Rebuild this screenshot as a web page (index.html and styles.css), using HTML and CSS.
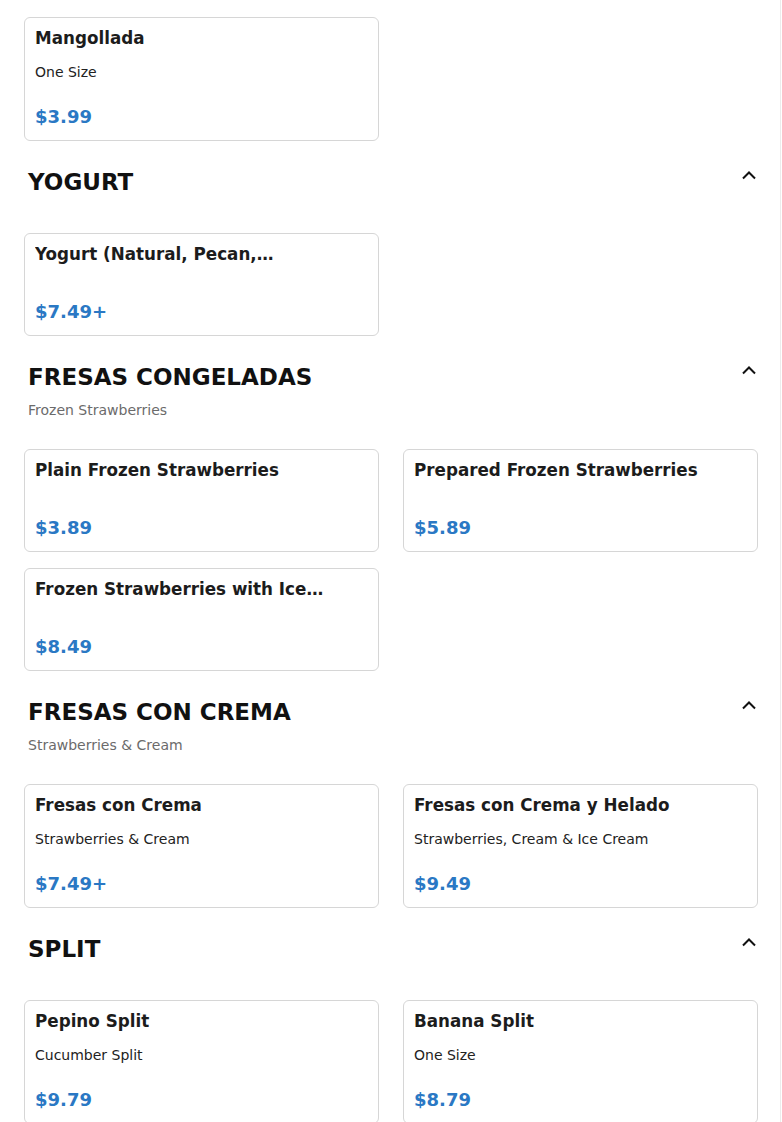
FILE: index.html
```html
<!DOCTYPE html>
<html lang="es">
<head>
<meta charset="utf-8">
<title>Menu</title>
<link rel="stylesheet" href="styles.css">
</head>
<body>
<div class="page">
  <div class="grid">
    <div class="card">
      <div class="title">Mangollada</div>
      <div class="desc">One Size</div>
      <div class="price">$3.99</div>
    </div>
  </div>

  <section class="section">
    <div class="head">
      <div class="head-text"><h2>YOGURT</h2></div>
      <svg class="chev" width="18" height="22" viewBox="0 0 18 22"><path d="M3 14.5 L9 8.5 L15 14.5" fill="none" stroke="#111" stroke-width="2"/></svg>
    </div>
    <div class="grid">
      <div class="card">
        <div class="title">Yogurt (Natural, Pecan,…</div>
        <div class="price">$7.49+</div>
      </div>
    </div>
  </section>

  <section class="section">
    <div class="head">
      <div class="head-text"><h2>FRESAS CONGELADAS</h2><p class="sub">Frozen Strawberries</p></div>
      <svg class="chev" width="18" height="22" viewBox="0 0 18 22"><path d="M3 14.5 L9 8.5 L15 14.5" fill="none" stroke="#111" stroke-width="2"/></svg>
    </div>
    <div class="grid">
      <div class="card">
        <div class="title">Plain Frozen Strawberries</div>
        <div class="price">$3.89</div>
      </div>
      <div class="card">
        <div class="title">Prepared Frozen Strawberries</div>
        <div class="price">$5.89</div>
      </div>
      <div class="card">
        <div class="title">Frozen Strawberries with Ice…</div>
        <div class="price">$8.49</div>
      </div>
    </div>
  </section>

  <section class="section">
    <div class="head">
      <div class="head-text"><h2>FRESAS CON CREMA</h2><p class="sub">Strawberries &amp; Cream</p></div>
      <svg class="chev" width="18" height="22" viewBox="0 0 18 22"><path d="M3 14.5 L9 8.5 L15 14.5" fill="none" stroke="#111" stroke-width="2"/></svg>
    </div>
    <div class="grid">
      <div class="card">
        <div class="title">Fresas con Crema</div>
        <div class="desc">Strawberries &amp; Cream</div>
        <div class="price">$7.49+</div>
      </div>
      <div class="card">
        <div class="title">Fresas con Crema y Helado</div>
        <div class="desc">Strawberries, Cream &amp; Ice Cream</div>
        <div class="price">$9.49</div>
      </div>
    </div>
  </section>

  <section class="section">
    <div class="head">
      <div class="head-text"><h2>SPLIT</h2></div>
      <svg class="chev" width="18" height="22" viewBox="0 0 18 22"><path d="M3 14.5 L9 8.5 L15 14.5" fill="none" stroke="#111" stroke-width="2"/></svg>
    </div>
    <div class="grid">
      <div class="card">
        <div class="title">Pepino Split</div>
        <div class="desc">Cucumber Split</div>
        <div class="price">$9.79</div>
      </div>
      <div class="card">
        <div class="title">Banana Split</div>
        <div class="desc">One Size</div>
        <div class="price">$8.79</div>
      </div>
    </div>
  </section>
</div>
</body>
</html>
```

FILE: styles.css
```css
html, body {
  margin: 0;
  padding: 0;
  background: #fff;
}
body {
  font-family: "DejaVu Sans", "Liberation Sans", sans-serif;
  color: #1a1a1a;
}
.page {
  width: 781px;
  min-height: 1200px;
  box-sizing: border-box;
  border-right: 1px solid #ececec;
  padding: 17px 22px 40px 24px;
}
.grid {
  display: grid;
  grid-template-columns: 1fr 1fr;
  column-gap: 24px;
  row-gap: 16px;
}
.card {
  border: 1px solid #d6d6d6;
  border-radius: 6px;
  padding: 10px 10px 10px 10px;
  display: flex;
  flex-direction: column;
}
.title {
  font-size: 16.75px;
  font-weight: bold;
  line-height: 21px;
  color: #1c1c1c;
  white-space: nowrap;
  overflow: hidden;
  margin-bottom: 13px;
}
.desc {
  font-size: 14px;
  line-height: 21px;
  color: #222;
}
.price {
  margin-top: 21px;
  font-size: 18px;
  font-weight: bold;
  line-height: 26px;
  color: #2a78c4;
}
.section {
  margin-top: 23px;
}
.head {
  display: flex;
  justify-content: space-between;
  align-items: flex-start;
  padding-left: 4px;
  margin-bottom: 33px;
}
.head h2 {
  margin: 0;
  font-size: 23px;
  line-height: 36px;
  font-weight: bold;
  color: #111;
}
.sub {
  margin: 5px 0 -4px 0;
  font-size: 14px;
  line-height: 20px;
  color: #6b6b6b;
}
.chev {
  display: block;
  flex: none;
}
```
